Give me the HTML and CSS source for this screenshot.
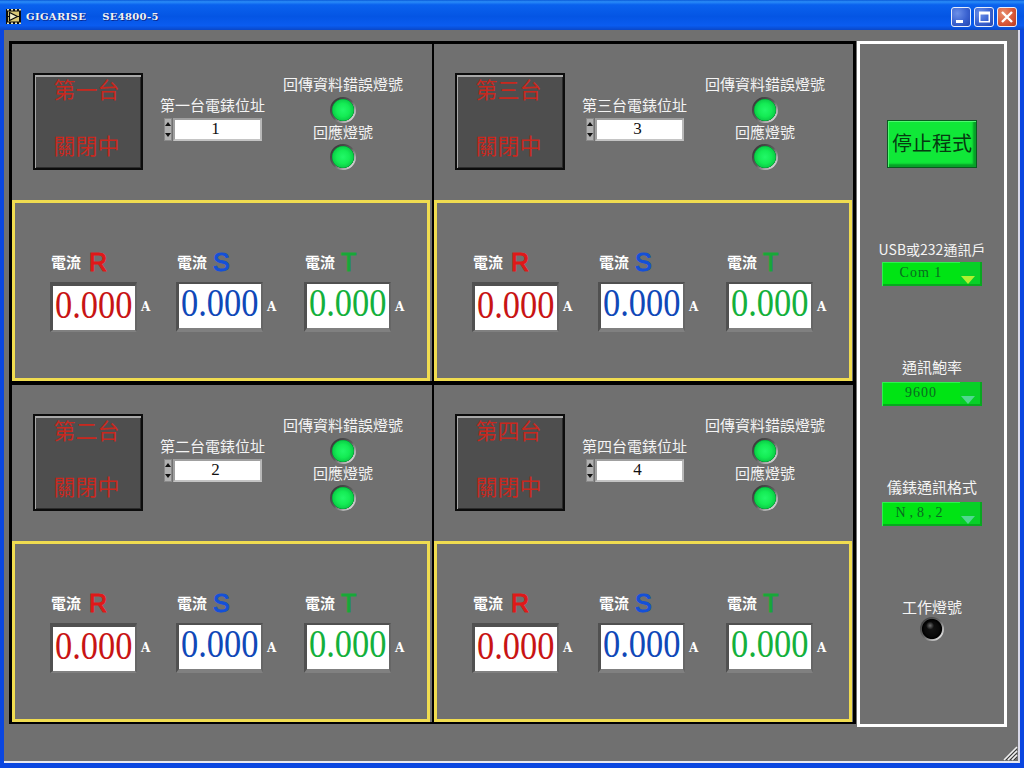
FILE: index.html
```html
<!DOCTYPE html>
<html lang="zh-Hant">
<head>
<meta charset="utf-8">
<title>GIGARISE SE4800-5</title>
<link rel="stylesheet" href="styles.css">
</head>
<body>
<div class="window">
  <header class="titlebar">
    <svg class="app-icon" width="15" height="15" viewBox="0 0 15 15"><rect width="15" height="15" fill="#0c0c0c"/><path d="M1 0h2v1.500H1zM5 0h2v1.500H5zM9 0h2v1.500H9zM13 0h2v1.500h-2zM1 13.500h2V15H1zM5 13.500h2V15H5zM9 13.500h2V15H9zM13 13.500h2V15h-2z" fill="#efe6b4"/><rect x="2" y="2.500" width="11" height="10" fill="#d9c877"/><path d="M3.500 3.500v8l8-4z" fill="#f4efc8" stroke="#0c0c0c" stroke-width="1.200"/><path d="M1 7.500h3M11 7.500h3" stroke="#0c0c0c" stroke-width="1"/></svg>
    <span class="title-text">GIGARISE</span>
    <span class="title-text title-model">SE4800-5</span>
    <div class="win-buttons">
      <span class="win-btn"><svg width="20" height="20" viewBox="0 0 20 20"><rect x="5" y="13" width="7" height="3" fill="#fff"/></svg></span>
      <span class="win-btn"><svg width="20" height="20" viewBox="0 0 20 20"><path d="M5 4.500h11v11H5z M6.500 7.500v6.500h8V7.500z" fill="#fff" fill-rule="evenodd"/></svg></span>
      <span class="win-btn win-close"><svg width="20" height="20" viewBox="0 0 20 20"><path d="M5 5l10 10M15 5L5 15" stroke="#fff" stroke-width="2.400"/></svg></span>
    </div>
  </header>
  <main class="client">
    <section class="board">

      <article class="cell">
        <div class="cell-top">
          <div class="toggle"><span>第一台</span><span>關閉中</span></div>
          <div class="address">
            <div class="label">第一台電錶位址</div>
            <div class="spin"><span class="spin-arrows"><i class="up"></i><i class="down"></i></span><span class="spin-value">1</span></div>
          </div>
          <div class="lights">
            <div class="label">回傳資料錯誤燈號</div><span class="led"></span>
            <div class="label">回應燈號</div><span class="led"></span>
          </div>
        </div>
        <div class="meters">
          <div class="meter"><div class="meter-label">電流<b class="ph ph-r">R</b></div><div class="meter-row low"><div class="display red"><span class="digits">0.000</span></div><span class="unit">A</span></div></div>
          <div class="meter"><div class="meter-label">電流<b class="ph ph-s">S</b></div><div class="meter-row"><div class="display blue"><span class="digits">0.000</span></div><span class="unit">A</span></div></div>
          <div class="meter"><div class="meter-label">電流<b class="ph ph-t">T</b></div><div class="meter-row"><div class="display green"><span class="digits">0.000</span></div><span class="unit">A</span></div></div>
        </div>
      </article>

      <article class="cell">
        <div class="cell-top">
          <div class="toggle"><span>第三台</span><span>關閉中</span></div>
          <div class="address">
            <div class="label">第三台電錶位址</div>
            <div class="spin"><span class="spin-arrows"><i class="up"></i><i class="down"></i></span><span class="spin-value">3</span></div>
          </div>
          <div class="lights">
            <div class="label">回傳資料錯誤燈號</div><span class="led"></span>
            <div class="label">回應燈號</div><span class="led"></span>
          </div>
        </div>
        <div class="meters">
          <div class="meter"><div class="meter-label">電流<b class="ph ph-r">R</b></div><div class="meter-row low"><div class="display red"><span class="digits">0.000</span></div><span class="unit">A</span></div></div>
          <div class="meter"><div class="meter-label">電流<b class="ph ph-s">S</b></div><div class="meter-row"><div class="display blue"><span class="digits">0.000</span></div><span class="unit">A</span></div></div>
          <div class="meter"><div class="meter-label">電流<b class="ph ph-t">T</b></div><div class="meter-row"><div class="display green"><span class="digits">0.000</span></div><span class="unit">A</span></div></div>
        </div>
      </article>

      <article class="cell">
        <div class="cell-top">
          <div class="toggle"><span>第二台</span><span>關閉中</span></div>
          <div class="address">
            <div class="label">第二台電錶位址</div>
            <div class="spin"><span class="spin-arrows"><i class="up"></i><i class="down"></i></span><span class="spin-value">2</span></div>
          </div>
          <div class="lights">
            <div class="label">回傳資料錯誤燈號</div><span class="led"></span>
            <div class="label">回應燈號</div><span class="led"></span>
          </div>
        </div>
        <div class="meters">
          <div class="meter"><div class="meter-label">電流<b class="ph ph-r">R</b></div><div class="meter-row low"><div class="display red"><span class="digits">0.000</span></div><span class="unit">A</span></div></div>
          <div class="meter"><div class="meter-label">電流<b class="ph ph-s">S</b></div><div class="meter-row"><div class="display blue"><span class="digits">0.000</span></div><span class="unit">A</span></div></div>
          <div class="meter"><div class="meter-label">電流<b class="ph ph-t">T</b></div><div class="meter-row"><div class="display green"><span class="digits">0.000</span></div><span class="unit">A</span></div></div>
        </div>
      </article>

      <article class="cell">
        <div class="cell-top">
          <div class="toggle"><span>第四台</span><span>關閉中</span></div>
          <div class="address">
            <div class="label">第四台電錶位址</div>
            <div class="spin"><span class="spin-arrows"><i class="up"></i><i class="down"></i></span><span class="spin-value">4</span></div>
          </div>
          <div class="lights">
            <div class="label">回傳資料錯誤燈號</div><span class="led"></span>
            <div class="label">回應燈號</div><span class="led"></span>
          </div>
        </div>
        <div class="meters">
          <div class="meter"><div class="meter-label">電流<b class="ph ph-r">R</b></div><div class="meter-row low"><div class="display red"><span class="digits">0.000</span></div><span class="unit">A</span></div></div>
          <div class="meter"><div class="meter-label">電流<b class="ph ph-s">S</b></div><div class="meter-row"><div class="display blue"><span class="digits">0.000</span></div><span class="unit">A</span></div></div>
          <div class="meter"><div class="meter-label">電流<b class="ph ph-t">T</b></div><div class="meter-row"><div class="display green"><span class="digits">0.000</span></div><span class="unit">A</span></div></div>
        </div>
      </article>

    </section>
    <aside class="side">
      <div class="stop-btn">停止程式</div>
      <div class="side-group first">
        <div class="label">USB或232通訊戶</div>
        <div class="select"><span class="select-value">Com 1</span><span class="select-arrow arrow-lime"></span></div>
      </div>
      <div class="side-group">
        <div class="label">通訊鮑率</div>
        <div class="select"><span class="select-value">9600</span><span class="select-arrow"></span></div>
      </div>
      <div class="side-group">
        <div class="label">儀錶通訊格式</div>
        <div class="select"><span class="select-value spaced">N,8,2</span><span class="select-arrow"></span></div>
      </div>
      <div class="side-group work">
        <div class="label">工作燈號</div>
        <span class="led led-off"></span>
      </div>
    </aside>
    <svg class="grip" width="16" height="16" viewBox="0 0 16 16"><path d="M15 2L2 15M15 6l-9 9M15 10l-5 5" stroke="#f0f0f0" stroke-width="1.500"/><path d="M15 4L4 15M15 8l-7 7M15 12l-3 3" stroke="#3c3c3c" stroke-width="1"/></svg>
  </main>
</div>
</body>
</html>
```
FILE: styles.css
```css
* { box-sizing: border-box; }
html, body { margin: 0; padding: 0; }
body {
  width: 1024px;
  height: 768px;
  overflow: hidden;
  font-family: "Noto Sans CJK TC", "Liberation Serif", serif;
  background: #0a3ed8;
}
.window {
  width: 1024px;
  height: 768px;
  display: flex;
  flex-direction: column;
  background: #0a46e0;
}
.titlebar {
  flex: 0 0 30px;
  display: flex;
  align-items: center;
  padding: 2px 7px 0 6px;
  background: linear-gradient(180deg, #0a5ad8 0, #2a8cf8 6%, #0a62ee 16%, #0455e4 55%, #0a5cf0 85%, #0a48c8 100%);
}
.app-icon { flex: none; }
.title-text {
  margin-left: 5px;
  font-family: "DejaVu Serif", "Liberation Serif", serif;
  font-size: 10px;
  font-weight: 700;
  letter-spacing: 0.35px;
  color: #f2f2f2;
  text-shadow: 1px 1px 0 #0a2a90;
}
.title-model { margin-left: 16px; }
.win-buttons { margin-left: auto; display: flex; gap: 3px; margin-top: 2px; }
.win-btn {
  width: 20px;
  height: 20px;
  display: block;
  border: 1px solid #e8eefc;
  border-radius: 3px;
  background: radial-gradient(circle at 30% 30%, #6c90e8 0, #3a62d0 55%, #2446b0 100%);
  overflow: hidden;
}
.win-btn svg { display: block; margin: -1px; }
.win-close { background: radial-gradient(circle at 30% 30%, #e89070 0, #d8583a 55%, #b83a20 100%); }
.client {
  flex: 1;
  position: relative;
  display: flex;
  align-items: flex-start;
  margin: 0 4px 5px 4px;
  padding: 11px 0 0 5px;
  background: #707070;
  border-right: 2px solid #d8d8e8;
  border-bottom: 2px solid #e8e8f0;
}
.board {
  width: 847px;
  height: 683px;
  display: grid;
  grid-template-columns: 420px 419px;
  grid-template-rows: 337px 337px;
  column-gap: 2px;
  row-gap: 4px;
  padding: 3px 3px 2px;
  background: #000;
}
.cell { display: flex; flex-direction: column; background: #707070; }
.cell-top {
  flex: 0 0 156px;
  display: flex;
  align-items: flex-start;
  padding: 29px 0 0 21px;
}
.toggle {
  width: 110px;
  height: 97px;
  display: flex;
  flex-direction: column;
  justify-content: space-between;
  align-items: center;
  padding: 0 3px 9px 0;
  color: #c8281e;
  font-size: 22px;
  line-height: 30px;
  background: #4e4e4e;
  border: 2px solid #0c0c0c;
  box-shadow: inset 1px 2px 0 #a8a8a8, inset -1px -1px 0 #2c2c2c;
}
.toggle span:first-child { margin-top: -2px; }
.label {
  color: #f4f4f4;
  font-size: 15px;
  line-height: 18px;
  text-align: center;
  white-space: nowrap;
}
.address { width: 105px; margin: 23px 0 0 17px; }
.spin { display: flex; margin: 4px 0 0 4px; height: 23px; }
.spin-arrows {
  width: 8px;
  display: flex;
  flex-direction: column;
  align-items: center;
  justify-content: space-around;
  background: #b0b0b0;
  border: 1px solid #8a8a8a;
}
.spin-arrows i { width: 0; height: 0; border-left: 3px solid transparent; border-right: 3px solid transparent; }
.spin-arrows .up { border-bottom: 4px solid #111; }
.spin-arrows .down { border-top: 4px solid #111; }
.spin-value {
  width: 89px;
  margin-left: 1px;
  padding-right: 4px;
  background: #fff;
  border: 2px solid;
  border-color: #a0a0a0 #b8b8b8 #c4c4c4 #a0a0a0;
  color: #111;
  font-family: "Liberation Serif", serif;
  font-size: 17px;
  line-height: 18px;
  text-align: center;
}
.lights {
  width: 120px;
  margin: 2px 0 0 18px;
  display: flex;
  flex-direction: column;
  align-items: center;
}
.led {
  display: block;
  flex: none;
  width: 26px;
  height: 26px;
  margin-top: 4px;
  border-radius: 50%;
  background:
    radial-gradient(circle closest-side at 50% 50%, #22f868 0, #14ec54 50%, #0cd048 78%, #0a9a38 84%, rgba(0,0,0,0) 88%),
    linear-gradient(135deg, #3c3c3c 15%, #5c5c5c 50%, #d4d4d4 85%);
}
.lights .led:last-child { margin-top: 3px; }
.led-off {
  width: 24px;
  height: 24px;
  margin-top: 0;
  background:
    radial-gradient(circle 4px at 42% 36%, #6e6e6e 0, rgba(40,40,40,0) 100%),
    radial-gradient(circle closest-side at 50% 50%, #141414 0, #0a0a0a 60%, #000 80%, rgba(0,0,0,0) 88%),
    linear-gradient(135deg, #444 15%, #666 50%, #dcdcdc 85%);
}
.meters {
  flex: 1;
  margin-right: 1px;
  width: 418px;
  display: grid;
  grid-template-columns: 126px 128px 100px;
  align-items: start;
  padding: 44px 0 0 35px;
  border: 3px solid #f0dc50;
}
.meter-label {
  height: 25px;
  display: flex;
  align-items: flex-end;
  padding-left: 1px;
  color: #fff;
  font-size: 15px;
  font-weight: 700;
  line-height: 20px;
}
.ph {
  margin: 0 0 -2px 8px;
  font-family: "Liberation Sans", sans-serif;
  font-size: 25px;
  font-weight: 400;
  line-height: 24px;
  -webkit-text-stroke: 1px currentColor;
}
.ph-r { color: #e01818; }
.ph-s { color: #1450d8; margin-left: 6px; }
.ph-t { color: #18a838; margin-left: 6px; }
.meter-row { display: flex; align-items: center; margin-top: 10px; }
.meter-row.low .display { border-width: 4px 2px 2px 3px; }
.display {
  display: flex;
  width: 87px;
  height: 50px;
  background: #fff;
  background-clip: padding-box;
  border-style: solid;
  border-width: 2px 2px 4px 3px;
  border-color: #505050 #666 #808080 #505050;
  font-family: "Liberation Serif", serif;
  font-size: 41px;
  line-height: 37px;
  white-space: nowrap;
}
.digits {
  flex: none;
  width: 92px;
  margin: 0 -12px 0 2px;
  transform: scaleX(0.84);
  transform-origin: 0 50%;
}
.red { color: #c81414; }
.blue { color: #1048b8; }
.green { color: #14b03c; }
.unit {
  margin-left: 4px;
  color: #fff;
  font-family: "DejaVu Serif", serif;
  font-size: 12px;
  font-weight: 700;
}
.side {
  width: 150px;
  height: 686px;
  margin-left: 1px;
  display: flex;
  flex-direction: column;
  align-items: center;
  padding-top: 76px;
  border: 3px solid #fff;
}
.stop-btn {
  width: 90px;
  height: 48px;
  margin-bottom: 72px;
  background: #10e838;
  border: 1px solid #0a5a20;
  box-shadow: inset 1px 1px 0 #50f870, inset -3px -3px 2px #08a028;
  color: #063a10;
  font-size: 20px;
  line-height: 44px;
  text-align: center;
  white-space: nowrap;
}
.side-group {
  height: 46px;
  margin-bottom: 74px;
  display: flex;
  flex-direction: column;
  align-items: center;
}
.side-group .label { line-height: 14px; margin-bottom: 8px; }
.side-group.first .label { font-size: 14px; margin: 2px 0 6px; }
.side-group.work .label { margin-bottom: 3px; }
.select {
  width: 100px;
  height: 24px;
  flex: none;
  display: flex;
  background: #00e414;
  box-shadow: inset 1px 1px 0 #30f050, inset 0 -2px 0 #08a820;
}
.select-value {
  flex: 1;
  font-family: "Liberation Serif", serif;
  font-size: 14px;
  line-height: 22px;
  color: #0a6a20;
  text-align: center;
  letter-spacing: 1px;
}
.select-value.spaced { letter-spacing: 4px; }
.select-arrow {
  flex: 0 0 22px;
  position: relative;
  background: #08d028;
  box-shadow: inset -2px 0 0 #08a820, inset 0 -2px 0 #08a820;
}
.select-arrow::after {
  content: "";
  position: absolute;
  left: 1px;
  top: 14px;
  border-left: 7px solid transparent;
  border-right: 7px solid transparent;
  border-top: 8px solid #50d890;
}
.arrow-lime::after { border-top-color: #b0f030; }
.grip { position: absolute; right: 0; bottom: 0; }
```
